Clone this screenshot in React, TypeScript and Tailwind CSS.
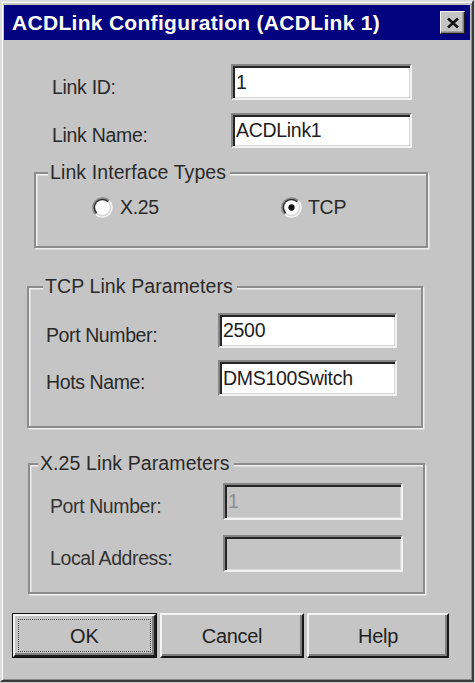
import React from "react"

// Win95-style dialog: ACDLink configuration

function TextBox({ value, disabled = false, w, h }: { value: string; disabled?: boolean; w: string; h: string }) {
  return (
    <div
      className={`${w} ${h} flex items-center border-2 border-t-[#858585] border-l-[#858585] border-r-[#f2f2f2] border-b-[#f2f2f2] shadow-[inset_2px_2px_0_#262626,inset_-1px_-1px_0_#d8d8d8] pl-[3px] pt-[1px] ${
        disabled ? "bg-[#c5c5c5] text-[#8e8e8e]" : "bg-white text-[#1e1e1e]"
      }`}
    >
      <span className="text-[19.5px] leading-none tracking-[-0.3px]">{value}</span>
    </div>
  )
}

function Radio({ checked }: { checked: boolean }) {
  return (
    <svg width="21" height="21" viewBox="0 0 20 20" className="shrink-0">
      <path d="M2.93 17.07 A10 10 0 0 1 17.07 2.93 Z" fill="#8a8a8a" />
      <path d="M17.07 2.93 A10 10 0 0 1 2.93 17.07 Z" fill="#f4f4f4" />
      <path d="M3.99 16.01 A8.5 8.5 0 0 1 16.01 3.99 Z" fill="#2e2e2e" />
      <path d="M16.01 3.99 A8.5 8.5 0 0 1 3.99 16.01 Z" fill="#d8d8d8" />
      <circle cx="10" cy="10" r="7" fill="#ffffff" />
      {checked && <circle cx="10" cy="10" r="3" fill="#111111" />}
    </svg>
  )
}

function GroupBox({
  title,
  titleLeft,
  className,
  children,
}: {
  title: string
  titleLeft: string
  className: string
  children: React.ReactNode
}) {
  return (
    <div
      className={`relative border-2 border-[#8c8c8c] shadow-[inset_1.5px_1.5px_0_#f0f0f0,1.5px_1.5px_0_#f0f0f0] ${className}`}
    >
      <span
        className={`absolute -top-[13px] ${titleLeft} bg-[#c5c5c5] pl-[2px] pr-[4px] text-[19.5px] leading-[22px] text-[#2a2a2a] tracking-[0.1px]`}
      >
        {title}
      </span>
      {children}
    </div>
  )
}

function Button({ label, isDefault = false, w }: { label: string; isDefault?: boolean; w: string }) {
  if (isDefault) {
    return (
      <div className={`${w} h-[45px] border-[1.5px] border-[#111]`}>
        <div className="w-full h-full flex items-center justify-center border-2 border-t-[#f4f4f4] border-l-[#f4f4f4] border-r-[#1c1c1c] border-b-[#1c1c1c] shadow-[inset_-2px_-2px_0_#7e7e7e] p-[3px]">
          <div className="w-full h-full flex items-center justify-center border border-dotted border-[#444]">
            <span className="text-[20px] leading-none text-[#222]">{label}</span>
          </div>
        </div>
      </div>
    )
  }
  return (
    <div
      className={`${w} h-[45px] flex items-center justify-center border-2 border-t-[#f4f4f4] border-l-[#f4f4f4] border-r-[#161616] border-b-[#161616] shadow-[inset_-2px_-2px_0_#7e7e7e]`}
    >
      <span className="text-[20px] leading-none text-[#222] tracking-[-0.3px]">{label}</span>
    </div>
  )
}

export default function App() {
  return (
    <div className="w-[475px] h-[683px] bg-[#d0d0d0] font-['Liberation_Sans',Arial,sans-serif]">
      <div className="w-[474px] h-[682px] bg-[#c5c5c5] border-2 border-t-[#dcdcdc] border-l-[#dcdcdc] border-r-[#3a3a3a] border-b-[#3a3a3a] shadow-[inset_1px_1px_0_#ffffff,inset_-1px_-1px_0_#8a8a8a] p-[2px]">
        {/* title bar */}
        <div className="mt-[1px] h-[35px] bg-[#03027f] flex items-center justify-between pl-[8px] pr-[5px]">
          <span className="text-white font-bold text-[21px] leading-none tracking-[0.3px]">
            ACDLink Configuration (ACDLink 1)
          </span>
          <div className="w-[25px] h-[23px] bg-[#c5c5c5] flex items-center justify-center border-[1.5px] border-t-[#f4f4f4] border-l-[#f4f4f4] border-r-[#1a1a1a] border-b-[#1a1a1a] shadow-[inset_-1.5px_-1.5px_0_#7e7e7e]">
            <svg width="14" height="12" viewBox="0 0 14 12">
              <path d="M2 1.5 L12 10.5 M12 1.5 L2 10.5" stroke="#151515" strokeWidth="2.6" />
            </svg>
          </div>
        </div>

        {/* link identity */}
        <div className="mt-[24px] flex items-center">
          <span className="ml-[48px] w-[179px] pt-[10px] leading-[20px] text-[19.5px] text-[#2a2a2a] tracking-[-0.3px]">Link ID:</span>
          <TextBox value="1" w="w-[181px]" h="h-[36px]" />
        </div>
        <div className="mt-[13px] flex items-center">
          <span className="ml-[48px] w-[179px] pt-[8px] leading-[20px] text-[19.5px] text-[#2a2a2a] tracking-[-0.3px]">Link Name:</span>
          <TextBox value="ACDLink1" w="w-[181px]" h="h-[35px]" />
        </div>

        <GroupBox title="Link Interface Types" titleLeft="left-[12px]" className="mt-[24px] ml-[30px] w-[394px] h-[76px]">
          <div className="pt-[23px] flex items-center">
            <div className="ml-[56px] w-[189px] flex items-center gap-[7px]">
              <Radio checked={false} />
              <span className="text-[19.5px] leading-none text-[#2a2a2a] tracking-[-0.3px]">X.25</span>
            </div>
            <div className="flex items-center gap-[6px]">
              <Radio checked />
              <span className="text-[19.5px] leading-none text-[#2a2a2a] tracking-[-0.3px]">TCP</span>
            </div>
          </div>
        </GroupBox>

        <GroupBox title="TCP Link Parameters" titleLeft="left-[14px]" className="mt-[38px] ml-[23px] w-[396px] h-[142px]">
          <div className="mt-[25px] flex items-center">
            <span className="ml-[17px] w-[172px] pt-[8px] leading-[20px] text-[19.5px] text-[#2a2a2a] tracking-[-0.4px]">Port Number:</span>
            <TextBox value="2500" w="w-[179px]" h="h-[35px]" />
          </div>
          <div className="mt-[12px] flex items-center">
            <span className="ml-[17px] w-[172px] pt-[8px] leading-[20px] text-[19.5px] text-[#2a2a2a] tracking-[-0.4px]">Hots Name:</span>
            <TextBox value="DMS100Switch" w="w-[179px]" h="h-[36px]" />
          </div>
        </GroupBox>

        <GroupBox title="X.25 Link Parameters" titleLeft="left-[8px]" className="mt-[35px] ml-[24px] w-[397px] h-[131px]">
          <div className="mt-[18px] flex items-center">
            <span className="ml-[20px] w-[173px] pt-[8px] leading-[20px] text-[19.5px] text-[#333] tracking-[-0.4px]">Port Number:</span>
            <TextBox value="1" disabled w="w-[180px]" h="h-[37px]" />
          </div>
          <div className="mt-[15px] flex items-center">
            <span className="ml-[20px] w-[173px] pt-[8px] leading-[20px] text-[19.5px] text-[#333] tracking-[-0.4px]">Local Address:</span>
            <TextBox value="" disabled w="w-[180px]" h="h-[37px]" />
          </div>
        </GroupBox>

        {/* dialog buttons */}
        <div className="mt-[19px] ml-[8px] flex items-center gap-[3px]">
          <Button label="OK" isDefault w="w-[145px]" />
          <Button label="Cancel" w="w-[144px]" />
          <Button label="Help" w="w-[142px]" />
        </div>
      </div>
    </div>
  )
}
